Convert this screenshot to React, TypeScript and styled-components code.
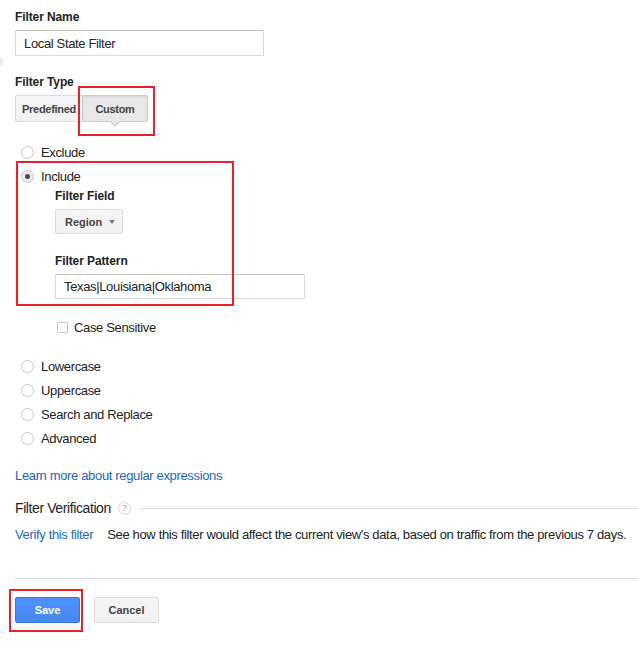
import styled, { createGlobalStyle } from "styled-components";

const GlobalStyle = createGlobalStyle`
  html, body {
    margin: 0;
    background: #fff;
  }
  body {
    font-family: "Liberation Sans", Arial, sans-serif;
    color: #222;
  }
`;

const SPage = styled.div`
  position: relative;
  width: 638px;
  box-sizing: border-box;
  padding: 9px 0 20px 15px;
  font-size: 13px;
  letter-spacing: -0.35px;
`;

const SEdgeMark = styled.div`
  position: absolute;
  left: -4px;
  top: 58px;
  width: 7px;
  height: 7px;
  background: #ececec;
  transform: rotate(45deg);
`;

const SLabel = styled.div<{ $top?: number }>`
  margin-top: ${(p) => p.$top ?? 0}px;
  margin-bottom: 5px;
  font-size: 12px;
  font-weight: bold;
  line-height: 16px;
  letter-spacing: -0.1px;
  color: #222;
`;

const STextInput = styled.input<{ $width: number; $height: number }>`
  display: block;
  box-sizing: border-box;
  width: ${(p) => p.$width}px;
  height: ${(p) => p.$height}px;
  margin: 0;
  padding: 0 8px;
  border: 1px solid #d9d9d9;
  border-top-color: #c4c4c4;
  border-radius: 1px;
  font-family: inherit;
  font-size: 13px;
  letter-spacing: -0.35px;
  color: #222;
  outline: none;
`;

const SToggleGroup = styled.div`
  display: flex;
`;

const SButton = styled.button<{ $variant?: "default" | "active" | "primary" }>`
  position: relative;
  box-sizing: border-box;
  min-width: 65px;
  height: 26px;
  margin: 0;
  padding: 0 8px;
  font-family: inherit;
  font-size: 11px;
  font-weight: bold;
  letter-spacing: 0;
  border-radius: 2px;
  cursor: pointer;
  color: ${(p) => (p.$variant === "primary" ? "#fff" : "#444")};
  background: ${(p) =>
    p.$variant === "primary"
      ? "linear-gradient(#4d90fe, #4787ed)"
      : p.$variant === "active"
        ? "#e8e8e8"
        : "linear-gradient(#f5f5f5, #f1f1f1)"};
  border: 1px solid
    ${(p) => (p.$variant === "primary" ? "#3079ed" : p.$variant === "active" ? "#ccc" : "#dcdcdc")};
  box-shadow: ${(p) => (p.$variant === "active" ? "inset 0 1px 2px rgba(0,0,0,0.08)" : "none")};
`;

const SSegment = styled(SButton)<{ $first?: boolean; $width: number }>`
  width: ${(p) => p.$width}px;
  min-width: 0;
  height: 27px;
  padding: 0;
  letter-spacing: -0.3px;
  border-radius: ${(p) => (p.$first ? "2px 0 0 2px" : "0 2px 2px 0")};
  ${(p) => (p.$first ? "border-right: none;" : "")}
`;

const SPointer = styled.span`
  position: absolute;
  left: 50%;
  bottom: -6px;
  margin-left: -6px;
  width: 0;
  height: 0;
  border-left: 6px solid transparent;
  border-right: 6px solid transparent;
  border-top: 6px solid #d4d4d4;

  &::after {
    content: "";
    position: absolute;
    left: -5px;
    top: -7px;
    border-left: 5px solid transparent;
    border-right: 5px solid transparent;
    border-top: 5px solid #e8e8e8;
  }
`;

const SAnnotation = styled.div<{ $top: number; $left: number; $width: number; $height: number }>`
  position: absolute;
  top: ${(p) => p.$top}px;
  left: ${(p) => p.$left}px;
  width: ${(p) => p.$width}px;
  height: ${(p) => p.$height}px;
  box-sizing: border-box;
  border: 2px solid #e8202a;
  pointer-events: none;
`;

const SOptions = styled.div`
  margin-top: 18px;
`;

const SOptionRow = styled.label<{ $top?: number }>`
  display: flex;
  align-items: center;
  height: 24px;
  margin-top: ${(p) => p.$top ?? 0}px;
  padding-left: 6px;
  gap: 7px;
  font-size: 13px;
  color: #222;
`;

const SRadio = styled.span<{ $checked?: boolean }>`
  position: relative;
  box-sizing: border-box;
  width: 13px;
  height: 13px;
  border: 1px solid #c6c6c6;
  border-radius: 50%;
  background: ${(p) => (p.$checked ? "#ebebeb" : "#fff")};

  &::after {
    content: "";
    display: ${(p) => (p.$checked ? "block" : "none")};
    position: absolute;
    left: 3px;
    top: 3px;
    width: 5px;
    height: 5px;
    border-radius: 50%;
    background: #4a4a4a;
  }
`;

const SIncludeGroup = styled.div`
  position: relative;
`;

const SNested = styled.div`
  padding-left: 40px;
`;

const SDropdown = styled.div`
  display: inline-flex;
  align-items: center;
  justify-content: space-between;
  box-sizing: border-box;
  width: 68px;
  height: 25px;
  padding: 0 7px 0 9px;
  font-size: 11px;
  font-weight: bold;
  letter-spacing: 0;
  color: #444;
  background: linear-gradient(#f5f5f5, #f1f1f1);
  border: 1px solid #dcdcdc;
  border-radius: 2px;
`;

const SCaret = styled.span`
  width: 0;
  height: 0;
  border-left: 3.5px solid transparent;
  border-right: 3.5px solid transparent;
  border-top: 4px solid #777;
`;

const SCheckRow = styled(SOptionRow)`
  padding-left: 42px;
  gap: 6px;
`;

const SCheckbox = styled.span`
  box-sizing: border-box;
  width: 11px;
  height: 11px;
  border: 1px solid #c6c6c6;
  border-radius: 1px;
  background: #fff;
`;

const SLink = styled.a<{ $top?: number }>`
  display: ${(p) => (p.$top !== undefined ? "block" : "inline")};
  margin-top: ${(p) => p.$top ?? 0}px;
  color: #2266bb;
  text-decoration: none;
  font-size: 13px;
  line-height: 16px;
`;

const SSectionHead = styled.div`
  display: flex;
  align-items: center;
  margin-top: 15px;
  height: 18px;
  font-size: 14px;
  letter-spacing: -0.4px;
  color: #222;
`;

const SHelp = styled.span`
  display: inline-flex;
  align-items: center;
  justify-content: center;
  box-sizing: border-box;
  width: 13px;
  height: 13px;
  margin-left: 7px;
  border: 1px solid #d6d6d6;
  border-radius: 50%;
  font-size: 9px;
  font-weight: bold;
  letter-spacing: 0;
  color: #bbb;
`;

const SRule = styled.span`
  flex: 1;
  height: 1px;
  margin-left: 8px;
  background: #dcdcdc;
`;

const SVerifyRow = styled.div`
  display: flex;
  gap: 14px;
  margin-top: 10px;
  line-height: 16px;
  font-size: 13px;
  white-space: nowrap;
`;

const SDivider = styled.hr`
  margin: 35px 0 0;
  border: none;
  height: 1px;
  background: #e0e0e0;
`;

const SActions = styled.div`
  display: flex;
  gap: 14px;
  margin-top: 18px;
`;

const SActionSlot = styled.div`
  position: relative;
`;

const otherOptions = ["Lowercase", "Uppercase", "Search and Replace", "Advanced"];

const App = () => {
  return (
    <>
      <GlobalStyle />
      <SPage>
        <SEdgeMark />
        <SLabel>Filter Name</SLabel>
        <STextInput $width={249} $height={26} defaultValue="Local State Filter" readOnly />

        <SLabel $top={18}>Filter Type</SLabel>
        <SToggleGroup>
          <SSegment $first $width={67}>
            Predefined
          </SSegment>
          <SSegment $variant="active" $width={66}>
            Custom
            <SPointer />
            <SAnnotation $top={-10} $left={-5} $width={77} $height={50} />
          </SSegment>
        </SToggleGroup>

        <SOptions>
          <SOptionRow>
            <SRadio />
            Exclude
          </SOptionRow>
          <SIncludeGroup>
            <SOptionRow>
              <SRadio $checked />
              Include
            </SOptionRow>
            <SNested>
              <SLabel>Filter Field</SLabel>
              <SDropdown>
                Region
                <SCaret />
              </SDropdown>
              <SLabel $top={19}>Filter Pattern</SLabel>
              <STextInput $width={250} $height={25} defaultValue="Texas|Louisiana|Oklahoma" readOnly />
            </SNested>
            <SAnnotation $top={-3} $left={1} $width={218} $height={145} />
          </SIncludeGroup>
          <SCheckRow $top={16}>
            <SCheckbox />
            Case Sensitive
          </SCheckRow>
          {otherOptions.map((option, i) => (
            <SOptionRow key={option} $top={i === 0 ? 15 : 0}>
              <SRadio />
              {option}
            </SOptionRow>
          ))}
        </SOptions>

        <SLink $top={18} href="#">
          Learn more about regular expressions
        </SLink>

        <SSectionHead>
          Filter Verification
          <SHelp>?</SHelp>
          <SRule />
        </SSectionHead>
        <SVerifyRow>
          <SLink href="#">Verify this filter</SLink>
          <span>See how this filter would affect the current view's data, based on traffic from the previous 7 days.</span>
        </SVerifyRow>

        <SDivider />
        <SActions>
          <SActionSlot>
            <SButton $variant="primary">Save</SButton>
            <SAnnotation $top={-8} $left={-6} $width={74} $height={43} />
          </SActionSlot>
          <SActionSlot>
            <SButton>Cancel</SButton>
          </SActionSlot>
        </SActions>
      </SPage>
    </>
  );
};

export default App;
